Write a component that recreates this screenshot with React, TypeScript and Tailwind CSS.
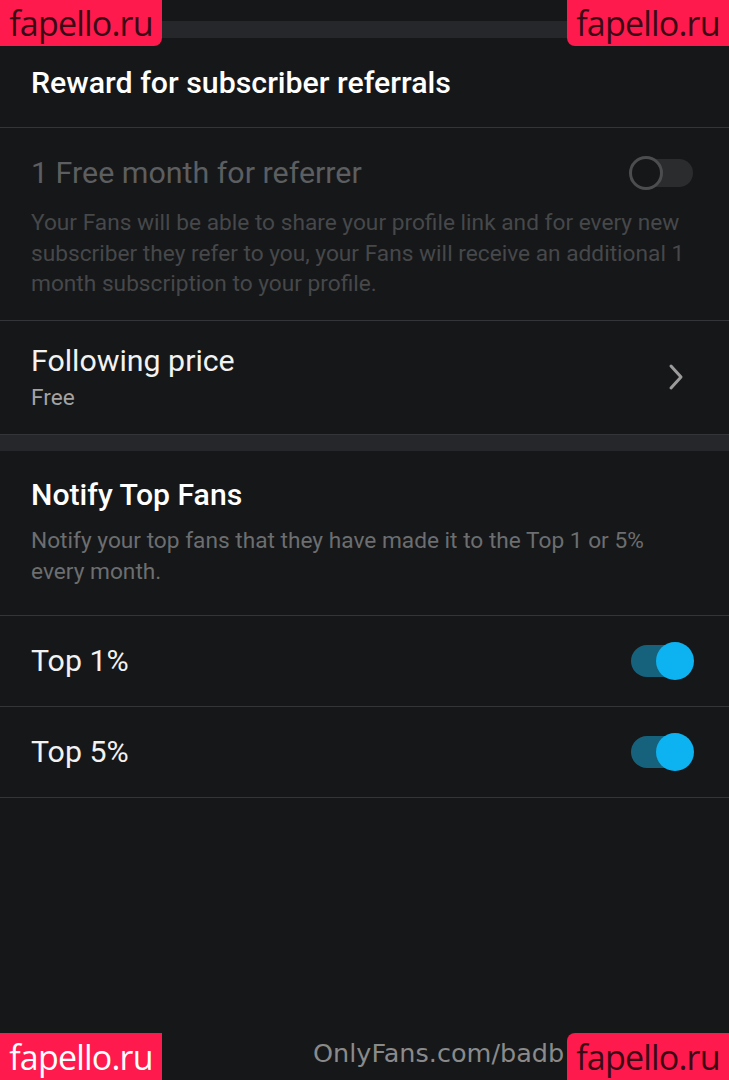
export default function App() {
  return (
    <div className="relative min-h-[1080px] overflow-hidden bg-[#161719] font-['Roboto',sans-serif]">
      <div className="h-[21px]" />
      <div className="h-[17px] bg-[#25272a]" />

      <div className="flex h-[90px] items-center border-b border-[#333538] px-[31px]">
        <h2 className="text-[30.3px] font-medium text-white">Reward for subscriber referrals</h2>
      </div>

      <div className="border-b border-[#333538] pb-[20px] pl-[31px] pr-[36px] pt-[28px]">
        <div className="flex items-center justify-between">
          <span className="text-[30.4px] leading-[34px] text-[#5c5e60]">1 Free month for referrer</span>
          <ToggleOff />
        </div>
        <p className="mt-[18px] text-[22.7px] leading-[30.5px] text-[#46484a]">
          Your Fans will be able to share your profile link and for every new subscriber they refer to you, your Fans will receive an additional 1 month subscription to your profile.
        </p>
      </div>

      <div className="flex items-center justify-between border-b border-[#333538] px-[31px] pb-[23px] pt-[23px]">
        <div>
          <div className="text-[30.3px] leading-[34px] text-[#f2f2f2]">Following price</div>
          <div className="mt-[7px] text-[22.6px] leading-[26px] text-[#a3a3a3]">Free</div>
        </div>
        <svg width="20" height="28" viewBox="0 0 20 28" className="mr-[12px]">
          <path d="M5 3 L15 14 L5 25" fill="none" stroke="#9b9b9b" strokeWidth="3" strokeLinecap="round" strokeLinejoin="round" />
        </svg>
      </div>

      <div className="h-[16px] bg-[#25272a]" />

      <div className="border-b border-[#333538] pb-[28px] pl-[31px] pr-[36px] pt-[27px]">
        <h2 className="text-[30.2px] font-medium leading-[34px] text-white">Notify Top Fans</h2>
        <p className="mt-[13px] text-[22.7px] leading-[31px] text-[#6c6e70]">
          Notify your top fans that they have made it to the Top 1 or 5% every month.
        </p>
      </div>

      <ToggleRow label="Top 1%" />
      <ToggleRow label="Top 5%" />

      <div className="absolute bottom-[8px] left-[313px] font-['DejaVu_Sans',sans-serif] text-[25.5px] text-[#8a8a8a]">
        OnlyFans.com/badb
      </div>

      <Mark className="left-0 top-0 rounded-br-[8px] text-[#3a0a16]" />
      <Mark className="right-0 top-0 rounded-bl-[8px] text-[#3a0a16]" />
      <Mark className="bottom-0 left-0 h-[47px] text-white" />
      <Mark className="bottom-0 right-0 h-[47px] rounded-tl-[8px] text-[#3a0a16]" />
    </div>
  )
}

function Mark({ className }: { className: string }) {
  return (
    <div
      className={`absolute flex h-[46px] w-[162px] items-center justify-center bg-[#fe1a4c] font-['Open_Sans',sans-serif] text-[34px] leading-none tracking-[-0.8px] ${className}`}
    >
      fapello.ru
    </div>
  )
}

function ToggleRow({ label }: { label: string }) {
  return (
    <div className="flex h-[91px] items-center justify-between border-b border-[#333538] pl-[31px] pr-[35px]">
      <span className="text-[30.3px] text-[#f2f2f2]">{label}</span>
      <ToggleOn />
    </div>
  )
}

function ToggleOn() {
  return (
    <div className="relative h-[38px] w-[63px]">
      <div className="absolute left-0 top-[3px] h-[32px] w-[58px] rounded-full bg-[#16627d]" />
      <div className="absolute right-0 top-0 h-[38px] w-[38px] rounded-full bg-[#0db3f0]" />
    </div>
  )
}

function ToggleOff() {
  return (
    <div className="relative h-[34px] w-[64px]">
      <div className="absolute right-0 top-[3px] h-[28px] w-[52px] rounded-full bg-[#2a2c2e]" />
      <div className="absolute left-0 top-0 h-[34px] w-[34px] rounded-full border-[3px] border-[#4b4d4f] bg-[#161719]" />
    </div>
  )
}
